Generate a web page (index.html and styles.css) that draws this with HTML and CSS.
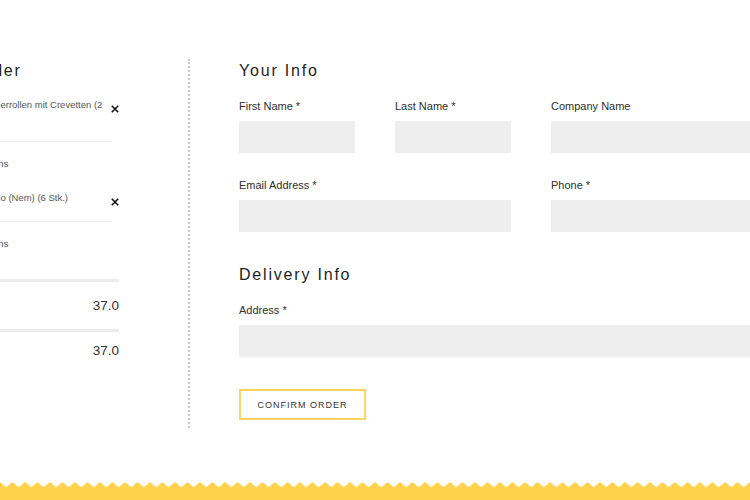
FILE: index.html
```html
<!DOCTYPE html>
<html lang="en">
<head>
<meta charset="utf-8">
<title>Checkout</title>
<link rel="stylesheet" href="styles.css">
</head>
<body>
<div class="page">
  <main class="checkout">
    <section class="order">
      <h2 class="title">Your Order</h2>
      <ul class="items">
        <li class="item">
          <div class="item-head">
            <span class="qty">1 x</span>
            <span class="name">Sommerrollen mit Crevetten (2 Stk.)</span>
            <button class="remove" type="button" aria-label="Remove">
              <svg width="8" height="8" viewBox="0 0 8 8"><path d="M0.8 0.8 L7.2 7.2 M7.2 0.8 L0.8 7.2" stroke="#111" stroke-width="1.6" fill="none"/></svg>
            </button>
          </div>
          <div class="opts">Add-ons</div>
        </li>
        <li class="item">
          <div class="item-head">
            <span class="qty">1 x</span>
            <span class="name">Cha gio (Nem) (6 Stk.)</span>
            <button class="remove" type="button" aria-label="Remove">
              <svg width="8" height="8" viewBox="0 0 8 8"><path d="M0.8 0.8 L7.2 7.2 M7.2 0.8 L0.8 7.2" stroke="#111" stroke-width="1.6" fill="none"/></svg>
            </button>
          </div>
          <div class="opts">Add-ons</div>
        </li>
      </ul>
      <div class="total-row first"><span>Subtotal</span><span>37.0</span></div>
      <div class="total-row last"><span>Total</span><span>37.0</span></div>
    </section>

    <section class="info">
      <h2 class="title">Your Info</h2>
      <div class="grid">
        <label class="field"><span class="label">First Name *</span><input class="input" type="text"></label>
        <label class="field"><span class="label">Last Name *</span><input class="input" type="text"></label>
        <label class="field span2"><span class="label">Company Name</span><input class="input" type="text"></label>
        <label class="field span2"><span class="label">Email Address *</span><input class="input" type="email"></label>
        <label class="field span2"><span class="label">Phone *</span><input class="input" type="tel"></label>
      </div>
      <h2 class="title delivery">Delivery Info</h2>
      <div class="grid">
        <label class="field span4"><span class="label">Address *</span><input class="input" type="text"></label>
      </div>
      <button class="confirm" type="button">Confirm Order</button>
    </section>
  </main>
  <footer class="footer">
    <svg class="zigzag" width="100%" height="19" aria-hidden="true">
      <defs>
        <pattern id="zz" width="12.5" height="19" patternUnits="userSpaceOnUse">
          <path d="M0 1 L6.25 6.2 L12.5 1 V19 H0 Z" fill="#ffd24d"/>
        </pattern>
      </defs>
      <rect width="100%" height="19" fill="url(#zz)"/>
    </svg>
  </footer>
</div>
</body>
</html>
```
FILE: styles.css
```css
html, body {
  margin: 0;
  padding: 0;
  height: 100%;
  overflow: hidden;
  background: #fff;
}
body {
  font-family: "Liberation Sans", Arial, sans-serif;
  color: #333;
}
.page {
  height: 500px;
  display: flex;
  flex-direction: column;
}
.checkout {
  display: flex;
  align-items: stretch;
  margin-left: -74px;
  padding-top: 59px;
}
.title {
  margin: 0;
  font-size: 16px;
  line-height: 24px;
  font-weight: normal;
  letter-spacing: 1.8px;
  color: #1e1e1e;
  white-space: nowrap;
}

/* Order column */
.order {
  width: 193px;
  flex-shrink: 0;
  margin-right: 69px;
}
.items {
  list-style: none;
  margin: 15px 0 8px;
  padding: 0;
  width: 185px;
}
.item-head {
  display: flex;
  align-items: flex-start;
  padding-bottom: 15px;
  border-bottom: 1px solid #eeeeee;
  font-size: 9.5px;
  line-height: 14px;
  color: #555;
}
.qty {
  width: 47px;
  flex-shrink: 0;
}
.name {
  flex: 1;
  min-width: 0;
}
.remove {
  width: 8px;
  height: 8px;
  margin: 6.5px -8px 0 0;
  padding: 0;
  border: 0;
  background: none;
  flex-shrink: 0;
  display: flex;
}
.opts {
  padding: 15px 0 20px 47px;
  font-size: 9.5px;
  line-height: 14px;
  color: #555;
}
.total-row {
  display: flex;
  justify-content: space-between;
  border-top: 3px solid #ececec;
  font-size: 13.5px;
  line-height: 20px;
  color: #333;
}
.total-row.first {
  padding: 14px 0 13px;
}
.total-row.last {
  padding: 9px 0 0;
}

/* Info column */
.info {
  flex-shrink: 0;
  width: 584px;
  padding: 0 0 8px 49px;
  border-left: 2px dotted #c9c9c9;
}
.grid {
  display: grid;
  grid-template-columns: repeat(4, 115.5px);
  column-gap: 40.5px;
  row-gap: 25px;
  margin-top: 16px;
}
.field {
  display: flex;
  flex-direction: column;
}
.span2 { grid-column: span 2; }
.span4 { grid-column: span 4; }
.label {
  font-size: 11px;
  line-height: 14px;
  color: #2e2e2e;
  margin-bottom: 8px;
}
.input {
  height: 32px;
  border: 0;
  margin: 0;
  padding: 0 10px;
  background: #eeeeee;
  box-sizing: border-box;
  width: 100%;
}
.title.delivery {
  margin-top: 31px;
}
.confirm {
  margin-top: 32px;
  height: 31px;
  width: 127px;
  box-sizing: border-box;
  border: 2px solid #ffd45c;
  background: #fff;
  padding: 0;
  font-family: "Liberation Sans", Arial, sans-serif;
  font-size: 9px;
  letter-spacing: 1px;
  text-transform: uppercase;
  color: #333;
}

/* Footer */
.footer {
  margin-top: auto;
  height: 19px;
}
.zigzag {
  display: block;
}
```
